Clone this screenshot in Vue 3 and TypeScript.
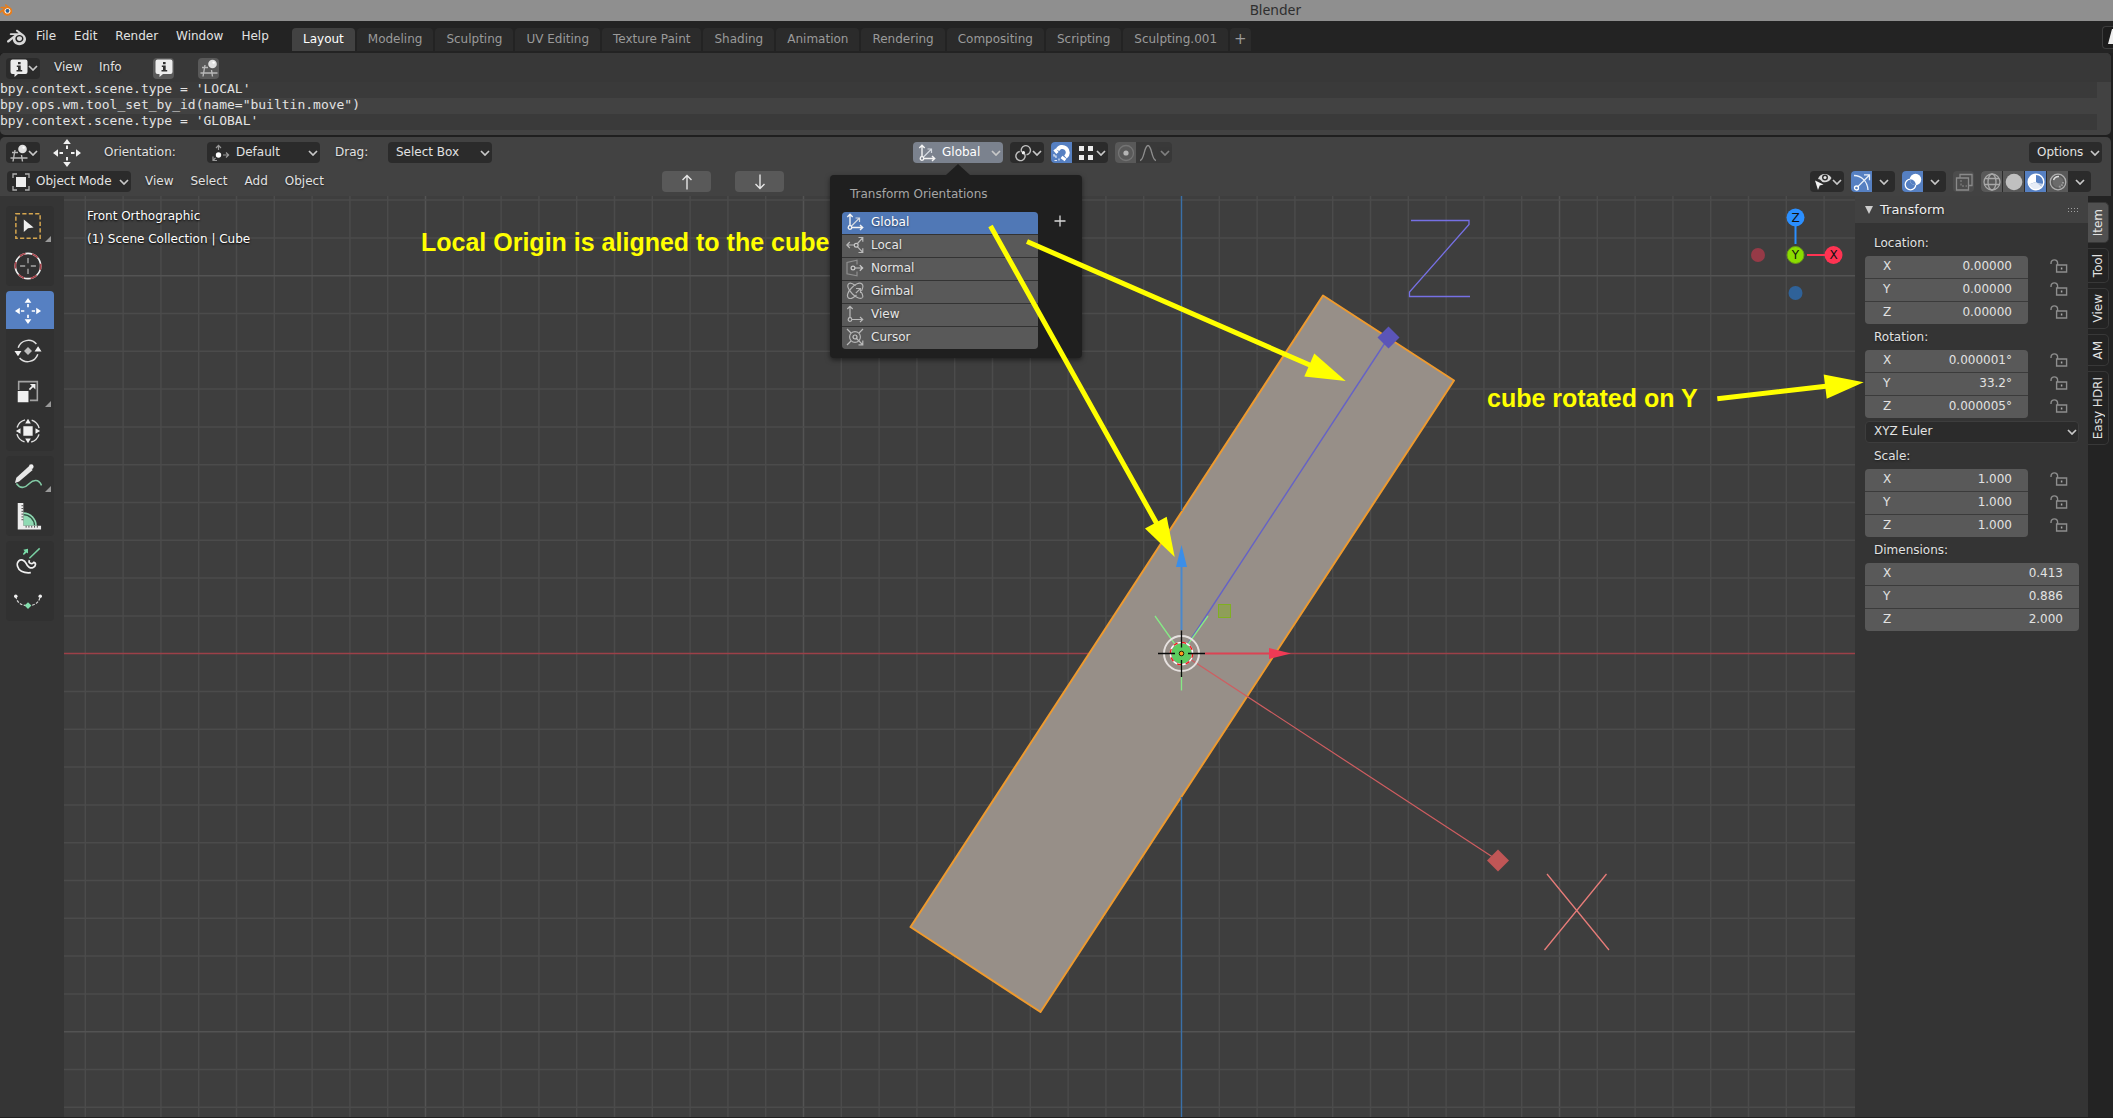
<script setup lang="ts">
import { ref } from 'vue'

interface Orientation { name: string; icon: string }
interface Field { axis: string; value: string }
interface FieldGroup { title: string; lockable: boolean; fields: Field[]; mode?: boolean }

const menus: string[] = ['File', 'Edit', 'Render', 'Window', 'Help']
const workspaces: string[] = [
  'Layout', 'Modeling', 'Sculpting', 'UV Editing', 'Texture Paint', 'Shading',
  'Animation', 'Rendering', 'Compositing', 'Scripting', 'Sculpting.001',
]
const activeWorkspace = ref('Layout')

const log: string[] = [
  "bpy.context.scene.type = 'LOCAL'",
  'bpy.ops.wm.tool_set_by_id(name="builtin.move")',
  "bpy.context.scene.type = 'GLOBAL'",
]

const orientations: Orientation[] = [
  { name: 'Global', icon: 'global' },
  { name: 'Local', icon: 'local' },
  { name: 'Normal', icon: 'normal' },
  { name: 'Gimbal', icon: 'gimbal' },
  { name: 'View', icon: 'view' },
  { name: 'Cursor', icon: 'cursor' },
]
const activeOrientation = ref('Global')

const viewMenus: string[] = ['View', 'Select', 'Add', 'Object']

const toolGroups: { id: string; label: string; more?: boolean }[][] = [
  [{ id: 'select', label: 'Select Box', more: true }, { id: 'cursor3d', label: 'Cursor' }],
  [
    { id: 'move', label: 'Move' }, { id: 'rotate', label: 'Rotate' },
    { id: 'scale', label: 'Scale', more: true }, { id: 'transform', label: 'Transform' },
  ],
  [{ id: 'annotate', label: 'Annotate', more: true }, { id: 'measure', label: 'Measure' }],
  [{ id: 'curve', label: 'Draw Curve' }, { id: 'points', label: 'Edit Points' }],
]
const activeTool = ref('move')

const groups = ref<FieldGroup[]>([
  { title: 'Location:', lockable: true, fields: [{ axis: 'X', value: '0.00000' }, { axis: 'Y', value: '0.00000' }, { axis: 'Z', value: '0.00000' }] },
  { title: 'Rotation:', lockable: true, mode: true, fields: [{ axis: 'X', value: '0.000001°' }, { axis: 'Y', value: '33.2°' }, { axis: 'Z', value: '0.000005°' }] },
  { title: 'Scale:', lockable: true, fields: [{ axis: 'X', value: '1.000' }, { axis: 'Y', value: '1.000' }, { axis: 'Z', value: '1.000' }] },
  { title: 'Dimensions:', lockable: false, fields: [{ axis: 'X', value: '0.413' }, { axis: 'Y', value: '0.886' }, { axis: 'Z', value: '2.000' }] },
])

const sideTabs: { name: string; size: string }[] = [
  { name: 'Item', size: 't40' }, { name: 'Tool', size: 't35' }, { name: 'View', size: 't41' },
  { name: 'AM', size: 't32' }, { name: 'Easy HDRI', size: 't74' },
]
const activeTab = ref('Item')

// World origin and grid step of the orthographic view
const origin = { x: 1181.5, y: 653.7 }
const step = 37.8
const range = (from: number, to: number): number[] => Array.from({ length: to - from + 1 }, (_, i) => from + i)
const columns = range(-29, 17).filter(k => k !== 0).map(k => ({ at: origin.x + k * step, major: k % 10 === 0 }))
const rows = range(-12, 12).filter(k => k !== 0).map(k => ({ at: origin.y + k * step, major: k % 10 === 0 }))
</script>

<template>
  <svg class="defs" aria-hidden="true">
    <symbol id="chev" viewBox="0 0 10 6"><path d="M1 1l4 4 4-4" fill="none" stroke="#c8c8c8" stroke-width="1.7" /></symbol>
    <symbol id="logo" viewBox="0 0 24 24">
      <path fill="currentColor" d="M12.51 13.214c.046-.8.438-1.506 1.03-2.006a3.424 3.424 0 0 1 2.212-.79c.85 0 1.631.3 2.211.79.592.5.983 1.206 1.028 2.005.045.823-.285 1.586-.865 2.153a3.389 3.389 0 0 1-2.374.938 3.393 3.393 0 0 1-2.376-.938c-.58-.567-.91-1.33-.865-2.152M7.35 14.831c.006.314.106.922.256 1.398a7.372 7.372 0 0 0 1.593 2.757 8.227 8.227 0 0 0 2.787 2.001 8.947 8.947 0 0 0 3.66.76 8.964 8.964 0 0 0 3.657-.772 8.285 8.285 0 0 0 2.785-2.01 7.428 7.428 0 0 0 1.592-2.762 6.964 6.964 0 0 0 .25-3.074 7.123 7.123 0 0 0-1.016-2.779 7.764 7.764 0 0 0-1.852-2.043h.002L13.566 2.55l-.02-.015c-.492-.378-1.319-.376-1.86.002-.547.382-.609 1.015-.123 1.415l-.001.001 3.126 2.543-9.53.01h-.013c-.788.001-1.545.518-1.695 1.172-.154.665.38 1.217 1.2 1.22V8.9l4.83-.01-8.62 6.617-.034.025c-.813.622-1.075 1.658-.563 2.313.52.667 1.625.668 2.447.004L7.414 14s-.069.52-.063.831zm12.09 1.741c-.97.988-2.326 1.548-3.795 1.55-1.47.004-2.827-.552-3.797-1.538a4.51 4.51 0 0 1-1.036-1.622 4.282 4.282 0 0 1 .282-3.519 4.702 4.702 0 0 1 1.153-1.371c.942-.768 2.141-1.183 3.396-1.185 1.256-.002 2.455.41 3.398 1.175.48.391.87.854 1.152 1.367a4.28 4.28 0 0 1 .522 1.706 4.236 4.236 0 0 1-.239 1.811 4.54 4.54 0 0 1-1.035 1.626" />
    </symbol>
    <symbol id="info" viewBox="0 0 18 18">
      <path d="M2.500 .5h13a2 2 0 0 1 2 2v10.500a2 2 0 0 1-2 2H8l-3.500 3V15h-2a2 2 0 0 1-2-2V2.500a2 2 0 0 1 2-2z" fill="#ececec" />
      <path d="M8 3h2.600v2.200H8zM6.800 6.500h3.900v4.500h1.500v1.400H6.500V11H8V8H6.800z" fill="#303030" />
    </symbol>
    <symbol id="view3d" viewBox="0 0 18 18">
      <circle cx="12.500" cy="5" r="4.300" fill="#e0e0e0" /><circle cx="13.600" cy="3.600" r="1.200" fill="#fff" />
      <path d="M2 8.500h6M.5 14h17M5 6L3 17.500M11.500 11l1 6.500" stroke="#b8b8b8" stroke-width="1.400" fill="none" />
    </symbol>
    <symbol id="move" viewBox="0 0 28 28">
      <path d="M14 0l3.800 5h-7.600zM14 28l3.800-5h-7.600zM0 14l5-3.800v7.600zM28 14l-5-3.800v7.600z" fill="#f0f0f0" />
      <path d="M14 6.500V10M14 18v3.500M6.500 14H10M18 14h3.500" stroke="#f0f0f0" stroke-width="2" />
    </symbol>
    <symbol id="default" viewBox="0 0 18 18">
      <circle cx="6.500" cy="11" r="2.700" fill="#fff" />
      <path d="M6.500 6V1.500M4 4l2.500-2.700L9 4M11 11h5.500M14 8.500l2.600 2.500-2.600 2.500M3.500 13.800L1.500 16M1 12.500V16.500h4" fill="none" stroke="#999" stroke-width="1.200" />
    </symbol>
    <symbol id="global" viewBox="0 0 18 18">
      <path d="M4 13V1.500M1.300 4L4 1.300 6.700 4M6 14.500h10.500M14 12l2.700 2.500L14 17" fill="none" stroke="#f4f4f4" stroke-width="1.400" />
      <path d="M5.500 13L13 5.500M9.500 5H13.500V9" fill="none" stroke="#d3d8df" stroke-width="1.200" />
      <circle cx="4" cy="14.500" r="1.800" fill="none" stroke="#f4f4f4" stroke-width="1.300" />
    </symbol>
    <symbol id="local" viewBox="0 0 18 18">
      <path d="M8.500 9H1M3.800 6L.8 9l3 3M11.500 7.500L16.500 2M12.500 1.500h4.300v4.300M11.500 10.800l5 5.200M12.500 16.500h4.300v-4.300" fill="none" stroke="#b9b9b9" stroke-width="1.200" />
      <circle cx="10.200" cy="9.200" r="1.900" fill="none" stroke="#c8c8c8" stroke-width="1.200" />
    </symbol>
    <symbol id="normal" viewBox="0 0 18 18">
      <path d="M11 5.500V1.200L1 3.500v11.300l10 2V12.500" fill="none" stroke="#8f8f8f" stroke-width="1.200" />
      <circle cx="7" cy="9" r="1.900" fill="none" stroke="#c8c8c8" stroke-width="1.200" />
      <path d="M9 9h7.500M13.800 6.200L16.700 9l-2.900 2.800" fill="none" stroke="#c8c8c8" stroke-width="1.200" />
    </symbol>
    <symbol id="gimbal" viewBox="0 0 18 18">
      <g fill="none" stroke="#b4b4b4" stroke-width="1.200">
        <path d="M3 1.500c-2.500 1.500-1 6 3.500 10.500 4 4 8.500 5.500 10 3.500M3 1.500c1.500-.8 4 .3 6.500 2.200" />
        <path d="M16 2c-2.500-2-7 0-10.500 4C1.500 10 .5 14.500 2.500 16c2 1.300 5-.2 8-3M16 2c1.500 1.500 1 4-.5 7M16.500 15.500c.8-1.500 0-3.500-1.300-5.500" />
        <path d="M9.800 11.200L14 7M10 6.500h4.500V11" />
      </g>
    </symbol>
    <symbol id="view" viewBox="0 0 18 18">
      <path d="M4 13V1.500M1.300 4L4 1.300 6.700 4M6 14.500h10.500M14 12l2.700 2.500L14 17" fill="none" stroke="#b9b9b9" stroke-width="1.200" />
      <circle cx="4" cy="14.500" r="1.800" fill="none" stroke="#b9b9b9" stroke-width="1.200" />
    </symbol>
    <symbol id="cursor" viewBox="0 0 18 18">
      <circle cx="9" cy="9" r="5.400" fill="none" stroke="#b4b4b4" stroke-width="1.200" /><circle cx="9" cy="9" r="2" fill="none" stroke="#c8c8c8" stroke-width="1.200" />
      <path d="M1 1l4 4M17 1l-4 4M1 17l4-4M10.500 10.500l6 6M12.500 16.800h4.300v-4.300" fill="none" stroke="#b9b9b9" stroke-width="1.200" />
    </symbol>
    <symbol id="objmode" viewBox="0 0 18 18">
      <rect x="4" y="4" width="10" height="10" fill="#eee" />
      <path d="M1 5V1h4M13 1h4v4M17 13v4h-4M5 17H1v-4" fill="none" stroke="#b0b0b0" stroke-width="1.300" />
    </symbol>
    <symbol id="pivot" viewBox="0 0 18 18">
      <path d="M7.600 8A4.600 4.600 0 1 1 12.500 10.800M10.500 9.800A4.600 4.600 0 1 1 5.800 7.500" fill="none" stroke="#c0c0c0" stroke-width="1.400" />
      <circle cx="9.400" cy="8.800" r="1.700" fill="#f2f2f2" />
    </symbol>
    <symbol id="magnet" viewBox="0 0 18 18">
      <path d="M4.500 6.200C6 2.500 10 2 12.800 4.300c2.700 2.400 2.700 6.200-.3 8.700" fill="none" stroke="#fff" stroke-width="4" />
      <path d="M1.500 5.500l3 3.500M8.500 13l4 3" stroke="#fff" stroke-width="3" /><path d="M1 10v2h2v2M1.500 16.500h2.500M6 14.500v2" stroke="#dfe8f5" stroke-width="1.200" fill="none" />
    </symbol>
    <symbol id="increment" viewBox="0 0 16 16"><path d="M1 1h5v5H1zM10 1h5v5h-5zM1 10h5v5H1zM10 10h5v5h-5z" fill="#ececec" /></symbol>
    <symbol id="prop" viewBox="0 0 18 18"><circle cx="9" cy="9" r="7.500" fill="none" stroke="#747474" stroke-width="1.300" /><circle cx="9" cy="9" r="2.600" fill="#b5b5b5" /></symbol>
    <symbol id="falloff" viewBox="0 0 18 18"><path d="M1 16.500C5.500 16 5 1.500 9 1.500S12.500 16 17 16.500" fill="none" stroke="#8c8c8c" stroke-width="1.400" /></symbol>
    <symbol id="eye" viewBox="0 0 18 18">
      <path d="M4 6C6-.5 14.500-.5 17.500 5c-2 4-6 5-9 4L6 6.500z" fill="#d8d8d8" /><circle cx="11" cy="4.600" r="3" fill="#2d2d2d" /><circle cx="11" cy="4.600" r="1.500" fill="#e8e8e8" />
      <path d="M1 7.500l8.500 4-3.800 1L4 17z" fill="#f2f2f2" />
    </symbol>
    <symbol id="gizmo" viewBox="0 0 18 18">
      <path d="M1 2.500C8 2.500 14.500 8 15 17M4.500 14L16 2.500M11 1.800h5.500v5.500" fill="none" stroke="#e9f0fa" stroke-width="1.300" /><circle cx="3.500" cy="15" r="2" fill="none" stroke="#fff" stroke-width="1.300" />
    </symbol>
    <symbol id="overlay" viewBox="0 0 18 18"><circle cx="11.500" cy="6.500" r="5.700" fill="#fff" /><circle cx="6.500" cy="11.500" r="5.300" fill="none" stroke="#fff" stroke-width="1.300" /><path d="M6.200 8.800a5.700 5.700 0 0 0 5.500 3.300 5.300 5.300 0 0 0-5.500-5.800z" fill="#5680c2" /></symbol>
    <symbol id="xray" viewBox="0 0 18 18"><path d="M5 5V1.500h12V12.500h-3.500M1.500 5h12v12h-12z" fill="none" stroke="#8a8a8a" stroke-width="1.300" /><path d="M6 7v6h6" fill="none" stroke="#8a8a8a" stroke-dasharray="2 1.500" /></symbol>
    <symbol id="wire" viewBox="0 0 18 18"><g fill="none" stroke="#a8a8a8" stroke-width="1.300"><circle cx="9" cy="9" r="8" /><ellipse cx="9" cy="9" rx="4" ry="8" /><path d="M2 5.500h14M1 11.500h16" /></g></symbol>
    <symbol id="solid" viewBox="0 0 18 18"><circle cx="9" cy="9" r="8.300" fill="#c0c0c0" /></symbol>
    <symbol id="material" viewBox="0 0 18 18">
      <circle cx="9" cy="9" r="7.800" fill="none" stroke="#fff" stroke-width="1.400" />
      <path d="M9 9V1.200A7.800 7.800 0 0 0 1.200 9a7.800 7.800 0 0 0 .4 2.500z" fill="#fff" />
      <path d="M9 9l6 5a7.800 7.800 0 0 1-13.300-2.500z" fill="#fff" opacity=".85" /><path d="M9 9.500l6.500 4.500 1-3z" fill="#fff" opacity=".6" />
    </symbol>
    <symbol id="rendered" viewBox="0 0 18 18"><circle cx="9" cy="9" r="7.800" fill="none" stroke="#b0b0b0" stroke-width="1.300" /><circle cx="9" cy="9" r="5.500" fill="#6b6b6b" /><path d="M4.500 7A5.500 5.500 0 0 1 10 3.500" stroke="#ddd" stroke-width="1.500" fill="none" /><path d="M14 9a5 5 0 0 1-5 5" stroke="#999" stroke-dasharray="1.500 1" fill="none" stroke-width="2" /></symbol>
    <symbol id="lock" viewBox="0 0 18 14"><path d="M1 5V4.200a3.300 3.300 0 0 1 6.600 0V6M6.600 6h10v7h-10z" fill="none" stroke="#8d8d8d" stroke-width="1.400" /><path d="M11.600 8.500v2" stroke="#aaa" stroke-width="1.500" /></symbol>
    <symbol id="t-select" viewBox="0 0 30 30"><rect x="2" y="2" width="26" height="26" fill="none" stroke="#d5a64f" stroke-width="1.600" stroke-dasharray="4.500 2.400" /><path d="M10.500 8l10.500 8.500-6 .8-4.500 4.200z" fill="#f0f0f0" /></symbol>
    <symbol id="t-cursor3d" viewBox="0 0 30 30"><circle cx="15" cy="15" r="13.600" fill="none" stroke="#f0f0f0" stroke-width="1.800" /><circle cx="15" cy="15" r="13.600" fill="none" stroke="#a8444c" stroke-width="1.800" stroke-dasharray="7 7.240" stroke-dashoffset="3" /><path d="M15 6.500V12M15 18v5.500M6.500 15H12M18 15h5.500" stroke="#a5a5a5" stroke-width="1.500" /></symbol>
    <symbol id="t-move" viewBox="0 0 30 30"><path d="M15 1l3.600 5.200h-7.200zM15 29l3.600-5.200h-7.200zM1 15l5.200-3.600v7.200zM29 15l-5.200-3.600v7.200z" fill="#fff" /><path d="M15 7.500v3.500M15 19v3.500M7.500 15H11M19 15h3.500" stroke="#fff" stroke-width="1.800" /></symbol>
    <symbol id="t-rotate" viewBox="0 0 30 30"><path d="M4.500 11.500A11.500 11.500 0 0 1 24 7.500M25.500 18.500A11.500 11.500 0 0 1 6 22.500" fill="none" stroke="#dedede" stroke-width="1.600" /><path d="M.5 15h7.500l-3.700 5.500zM22 15.500h7.500l-3.700-5.500z" fill="#f0f0f0" /><path d="M15 10.800l4.300 4.300-4.300 4.300-4.300-4.300z" fill="#bdbdbd" /></symbol>
    <symbol id="t-scale" viewBox="0 0 30 30"><path d="M5 14V5h20v20H17" fill="none" stroke="#a2a2a2" stroke-width="1.700" /><path d="M4 15h11.500v12H4z" fill="#f0f0f0" /><path d="M16.500 13.500l4-4" stroke="#f0f0f0" stroke-width="1.800" /><path d="M17 7.500h6V13.500z" fill="#f0f0f0" /></symbol>
    <symbol id="t-transform" viewBox="0 0 30 30"><circle cx="15" cy="15" r="12.300" fill="none" stroke="#e0e0e0" stroke-width="1.500" stroke-dasharray="12 7.320" stroke-dashoffset="-3.660" /><path d="M10 10h10v10H10zM15 2l3 5h-6zM15 28l3-5h-6zM2 15l5-3v6zM28 15l-5-3v6z" fill="#f0f0f0" /></symbol>
    <symbol id="t-annotate" viewBox="0 0 30 30"><path d="M2.500 23c5 7 10 4 14 0s10-5 13 2" fill="none" stroke="#82c9a4" stroke-width="1.700" /><path d="M1 22.500l1.500-5.500L16 4.500l4 4L5.500 21z" fill="#e8e8e8" /><circle cx="18.500" cy="5" r="2.500" fill="#f0f0f0" /></symbol>
    <symbol id="t-measure" viewBox="0 0 30 30"><path d="M10 11a15 15 0 0 1 14.500 14.500H10z" fill="#8fdab3" /><path d="M10 13.500A12 12 0 0 1 22 25" fill="none" stroke="#2f4f40" stroke-width="1.400" /><path d="M4 1h6v24.500h19V29.500H4z" fill="#ececec" /><path d="M8 4h2M8 7h2M8 10h2M8 13h2M8 16h2M8 19h2M13 25.500v2M16 25.500v2M19 25.500v2M22 25.500v2M25 25.500v2" stroke="#444" /></symbol>
    <symbol id="t-curve" viewBox="0 0 30 30"><path d="M16.500 12L27.500 1.500" stroke="#79cfa2" stroke-width="1.600" /><path d="M15 2v5l-1.500-1-3 2.500-1-1 2-3L10 3z" fill="#79dca8" /><path d="M16.500 14c-1.500 3.500 2.500 5 4.500 2.500 3 .5 2.500 4-.5 5.500-3 1.500-6-1-7.500-4.500-2-4-5.500-4.500-8-2.500-3 3-1 9 3 11 3 1.500 6 2 10 1.500" fill="none" stroke="#f0f0f0" stroke-width="1.800" /></symbol>
    <symbol id="t-points" viewBox="0 0 30 30"><path d="M2 10c1 7 6 10 13 10s12-3 13-10" fill="none" stroke="#cfcfcf" stroke-width="1.300" stroke-dasharray="3 1.500" /><circle cx="1.900" cy="10" r="1.900" fill="#f0f0f0" /><circle cx="28.100" cy="10" r="1.900" fill="#f0f0f0" /><path d="M15 16.300l3.600 3.600-3.600 3.600-3.600-3.600z" fill="#84dfae" /></symbol>
  </svg>

  <div class="app">
    <header class="titlebar">
      <svg class="app-icon" viewBox="4 0 20 24"><circle cx="15.700" cy="13.500" r="6" fill="#fff" /><use href="#logo" width="24" height="24" /><circle cx="15.700" cy="13.400" r="3.200" fill="#28629c" /></svg>
      <span>Blender</span>
    </header>

    <nav class="menubar">
      <svg class="brand"><use href="#logo" /></svg>
      <div class="menus"><button v-for="m in menus" :key="m">{{ m }}</button></div>
      <div class="tabs">
        <button v-for="w in workspaces" :key="w" :class="{ on: w === activeWorkspace }" @click="activeWorkspace = w">{{ w }}</button>
        <button class="add" aria-label="Add workspace">+</button>
      </div>
      <button class="scene-btn" aria-label="Scene"><svg viewBox="0 0 10 16"><path d="M5 0h5v15H1z" fill="#eee" /></svg></button>
    </nav>

    <section class="info">
      <div class="info-head">
        <button class="editor" aria-label="Editor type"><svg class="i18"><use href="#info" /></svg><svg class="chev"><use href="#chev" /></svg></button>
        <button class="text info-view">View</button>
        <button class="text info-info">Info</button>
        <button class="chip" aria-label="Info log"><svg class="i18"><use href="#info" /></svg></button>
        <button class="chip chip2" aria-label="3D viewport"><svg class="i18"><use href="#view3d" /></svg></button>
      </div>
      <div class="log"><p v-for="line in log" :key="line">{{ line }}</p></div>
    </section>

    <main class="editor3d">
      <div class="heads">
        <div class="row row1">
          <div class="side">
            <button class="editor" aria-label="Editor type"><svg class="i18"><use href="#view3d" /></svg><svg class="chev"><use href="#chev" /></svg></button>
            <svg class="cross"><use href="#move" /></svg>
            <label class="text lab-orient" for="orient">Orientation:</label>
            <div class="dd dd-orient iconed"><svg class="i18 lead"><use href="#default" /></svg><select id="orient"><option>Default</option></select><svg class="chev"><use href="#chev" /></svg></div>
            <label class="text lab-drag" for="drag">Drag:</label>
            <div class="dd dd-drag"><select id="drag"><option>Select Box</option></select><svg class="chev"><use href="#chev" /></svg></div>
          </div>
          <div class="mid">
            <div class="orient-wrap">
              <button class="orient-btn"><svg class="i18"><use href="#global" /></svg><span>Global</span><svg class="chev"><use href="#chev" /></svg></button>
              <div class="popup">
                <h2>Transform Orientations</h2>
                <div class="popup-body">
                  <div class="choices">
                    <button v-for="o in orientations" :key="o.name" :class="{ on: o.name === activeOrientation }" @click="activeOrientation = o.name">
                      <svg class="i18"><use :href="'#' + o.icon" /></svg>{{ o.name }}
                    </button>
                  </div>
                  <button class="plus" aria-label="Add orientation"><svg viewBox="0 0 12 12"><path d="M6 .5v11M.5 6h11" stroke="#d8d8d8" stroke-width="1.300" /></svg></button>
                </div>
              </div>
            </div>
            <button class="editor" aria-label="Pivot point"><svg class="i18"><use href="#pivot" /></svg><svg class="chev"><use href="#chev" /></svg></button>
            <div class="joined">
              <button class="sq on" aria-label="Snap"><svg class="i18"><use href="#magnet" /></svg></button>
              <button class="wide" aria-label="Snap to"><svg class="i16"><use href="#increment" /></svg><svg class="chev"><use href="#chev" /></svg></button>
            </div>
            <div class="joined faded">
              <button class="sq grey" aria-label="Proportional editing"><svg class="i18"><use href="#prop" /></svg></button>
              <button class="wide" aria-label="Falloff"><svg class="i18"><use href="#falloff" /></svg><svg class="chev"><use href="#chev" /></svg></button>
            </div>
          </div>
          <div class="side end">
            <button class="options"><span>Options</span><svg class="chev"><use href="#chev" /></svg></button>
          </div>
        </div>

        <div class="row row2">
          <div class="dd dd-mode iconed"><svg class="i18 lead"><use href="#objmode" /></svg><select aria-label="Mode"><option>Object Mode</option></select><svg class="chev"><use href="#chev" /></svg></div>
          <div class="view-menus"><button v-for="m in viewMenus" :key="m" class="text">{{ m }}</button></div>
          <div class="arrows">
            <button aria-label="Up"><svg viewBox="0 0 12 16"><path d="M6 15.500V1.500M1.500 6L6 1.500 10.500 6" fill="none" stroke="#e6e6e6" stroke-width="1.400" /></svg></button>
            <button aria-label="Down"><svg viewBox="0 0 12 16"><path d="M6 .5v14M1.500 10L6 14.500l4.500-4.500" fill="none" stroke="#e6e6e6" stroke-width="1.400" /></svg></button>
          </div>
          <div class="shading">
            <button class="editor" aria-label="Visibility"><svg class="i18"><use href="#eye" /></svg><svg class="chev"><use href="#chev" /></svg></button>
            <div class="joined"><button class="sq on" aria-label="Gizmos"><svg class="i18"><use href="#gizmo" /></svg></button><button class="drop" aria-label="Gizmo options"><svg class="chev"><use href="#chev" /></svg></button></div>
            <div class="joined"><button class="sq on" aria-label="Overlays"><svg class="i18"><use href="#overlay" /></svg></button><button class="drop" aria-label="Overlay options"><svg class="chev"><use href="#chev" /></svg></button></div>
            <button class="sq dim" aria-label="X-ray"><svg class="i18"><use href="#xray" /></svg></button>
            <div class="joined modes">
              <button class="sq grey" aria-label="Wireframe"><svg class="i18"><use href="#wire" /></svg></button>
              <button class="sq grey" aria-label="Solid"><svg class="i18"><use href="#solid" /></svg></button>
              <button class="sq on" aria-label="Material preview"><svg class="i18"><use href="#material" /></svg></button>
              <button class="sq grey" aria-label="Rendered"><svg class="i18"><use href="#rendered" /></svg></button>
              <button class="drop" aria-label="Shading options"><svg class="chev"><use href="#chev" /></svg></button>
            </div>
          </div>
        </div>
      </div>

      <div class="work">
        <aside class="tools">
          <div v-for="(g, gi) in toolGroups" :key="gi" class="tool-group">
            <button v-for="t in g" :key="t.id" :class="{ on: t.id === activeTool, flyout: t.more }" :aria-label="t.label" @click="activeTool = t.id">
              <svg class="i28"><use :href="'#t-' + t.id" /></svg>
            </button>
          </div>
        </aside>

        <section class="viewport">
          <svg class="scene" viewBox="64 196 1791 921" preserveAspectRatio="xMidYMid slice">
            <line v-for="c in columns" :key="'c' + c.at" :x1="c.at" :x2="c.at" y1="196" y2="1117" :class="c.major ? 'major' : 'minor'" />
            <line v-for="r in rows" :key="'r' + r.at" :y1="r.at" :y2="r.at" x1="64" x2="1855" :class="r.major ? 'major' : 'minor'" />
            <path d="M64 653.500H1855" stroke="#9c4048" stroke-width="1.300" />
            <path d="M1323 295.500L1454 380.500 1040.500 1012 910.500 927z" fill="#978f88" stroke="#ee9a2e" stroke-width="2" stroke-linejoin="round" />
            <path d="M1181.500 196V511M1181.500 797V1117" stroke="#3a70a8" stroke-width="1.400" />
            <path d="M1181.500 653.500L1388.500 337.500" stroke="#6562c6" stroke-width="1.400" />
            <path d="M1388.500 326.500l11 11-11 11-11-11z" fill="#5b55b8" />
            <path d="M1411 220.500h58v4L1409.500 292v4.500H1470" fill="none" stroke="#7670e4" stroke-width="1.300" />
            <path d="M1181.500 653.500L1498 860.500" stroke="#cf5d60" stroke-width="1.200" />
            <path d="M1498 849.500l11 11-11 11-11-11z" fill="#c05656" />
            <path d="M1547 874l62 76M1606.500 874l-62 76" stroke="#e77c79" stroke-width="1.300" />
            <path d="M1181.500 630V566" stroke="#4a88cc" stroke-width="2" /><path d="M1181.500 545l5.500 22h-11z" fill="#3b8ee8" />
            <path d="M1205 653.500h65" stroke="#dc4353" stroke-width="2" /><path d="M1291 653.500l-22 5.500v-11z" fill="#f03a55" />
            <rect x="1218.500" y="604.500" width="12" height="13" fill="#8f9e59" stroke="#80b021" />
            <path d="M1155 616l26.500 37.500L1208 616M1181.500 653.500v37" fill="none" stroke="#86e986" stroke-width="1.300" />
            <circle cx="1181.500" cy="653.500" r="10" fill="#5dcc60" />
            <circle cx="1181.500" cy="653.500" r="17.500" fill="none" stroke="#e6e1df" stroke-width="2" />
            <circle cx="1181.500" cy="653.500" r="11.200" fill="none" stroke="#fff" stroke-width="1.300" /><circle cx="1181.500" cy="653.500" r="11.200" fill="none" stroke="#f01818" stroke-width="1.300" stroke-dasharray="4.400 4.400" />
            <path d="M1158 653.500h17M1188 653.500h17M1181.500 630.500v17M1181.500 660v17" stroke="#0a0a0a" stroke-width="1.300" />
            <circle cx="1181.500" cy="653.500" r="2.300" fill="#ff9a1f" stroke="#2b1a00" />
          </svg>

          <div class="caption"><p>Front Orthographic</p><p>(1) Scene Collection | Cube</p></div>

          <svg class="nav" viewBox="0 0 86 96">
            <path d="M45.500 18v23" stroke="#2b8fff" stroke-width="2" /><path d="M57 52h27" stroke="#ff3352" stroke-width="2" />
            <circle cx="8" cy="52" r="7" fill="#963a47" /><circle cx="45.500" cy="90" r="7" fill="#2f6299" />
            <circle cx="45.500" cy="14.500" r="9" fill="#2b8fff" /><circle cx="83.500" cy="52" r="9" fill="#ff3352" /><circle cx="45.500" cy="52" r="8.500" fill="#8bdc00" stroke="#6a9c16" />
            <g class="axis-name"><text x="45.500" y="19">Z</text><text x="45.500" y="56">Y</text><text x="83.500" y="56">X</text></g>
          </svg>

          <svg class="notes" viewBox="64 196 1791 921" preserveAspectRatio="xMidYMid slice">
            <g fill="#ffff00" stroke="none">
              <path d="M1174.700 557l-29.700-28.500 21.700-11.800z" /><path d="M1345.700 381l-41.400-4.600 10-22.800z" /><path d="M1863.700 382.300l-40-7.800 3 24.200z" />
            </g>
            <g stroke="#ffff00" stroke-width="5"><path d="M990.500 226L1157 524M1027 241.500L1312 366M1717.300 398.700L1828 386" /></g>
            <text x="421" y="251">Local Origin is aligned to the cube</text>
            <text x="1487" y="407">cube rotated on Y</text>
          </svg>
        </section>

        <aside class="sidebar">
          <h3><svg class="tri" viewBox="0 0 8 8"><path d="M0 0h8L4 8z" fill="#ccc" /></svg>Transform<span class="grip"></span></h3>
          <div class="props">
            <template v-for="g in groups" :key="g.title">
              <h4>{{ g.title }}</h4>
              <div class="prop-row">
                <div class="fields">
                  <label v-for="f in g.fields" :key="f.axis"><span>{{ f.axis }}</span><input v-model="f.value" type="text" /></label>
                </div>
                <div v-if="g.lockable" class="locks">
                  <button v-for="f in g.fields" :key="f.axis" :aria-label="'Lock ' + f.axis"><svg><use href="#lock" /></svg></button>
                </div>
              </div>
              <div v-if="g.mode" class="dd dd-euler"><select aria-label="Rotation mode"><option>XYZ Euler</option></select><svg class="chev"><use href="#chev" /></svg></div>
            </template>
          </div>
        </aside>
        <nav class="side-tabs">
          <button v-for="t in sideTabs" :key="t.name" :class="[t.size, { on: t.name === activeTab }]" @click="activeTab = t.name"><span>{{ t.name }}</span></button>
        </nav>
      </div>
    </main>
  </div>
</template>

<style>
body { margin: 0; background: #1f1f1f; }
</style>

<style scoped>
* { box-sizing: border-box; }
.defs { position: absolute; width: 0; height: 0; }
.app { min-height: 100vh; display: flex; flex-direction: column; padding-bottom: 1px; background: #1f1f1f; color: #e2e2e2; font: 12px/16px "DejaVu Sans", sans-serif; overflow: hidden; }
button { font: inherit; color: inherit; border: 0; margin: 0; padding: 0; background: none; display: flex; align-items: center; white-space: nowrap; }
p, h2, h3, h4 { margin: 0; font: inherit; }
svg { flex: none; display: block; }
.i18 { width: 18px; height: 18px; }
.i16 { width: 16px; height: 16px; }
.i28 { width: 28px; height: 28px; }
.chev { width: 10px; height: 6px; }

.titlebar { position: relative; height: 21px; background: #8f8f8f; color: #2e2e2e; display: flex; align-items: center; justify-content: center; font: 14px/20px "Noto Sans", sans-serif; padding-bottom: 2px; }
.titlebar span { margin-left: 438px; }
.app-icon { position: absolute; left: 0; top: 3px; width: 13px; height: 14px; color: #e87d1a; }

.menubar { height: 32px; background: #232323; display: flex; align-items: center; padding-left: 7px; }
.brand { width: 19px; height: 19px; color: #d8d8d8; }
.menus { display: flex; gap: 18px; margin-left: 10px; width: 256px; padding-bottom: 2px; }
.tabs { display: flex; gap: 2px; align-self: flex-end; margin-bottom: 2px; }
.tabs button { height: 23px; padding: 0 11px 2px; border-radius: 4px 4px 0 0; background: #2b2b2b; color: #9a9a9a; }
.tabs button.on { background: #424242; color: #fff; }
.tabs .add { padding: 0 4px 2px; font-size: 15px; }
.scene-btn { margin-left: auto; width: 11px; height: 23px; border: 1px solid #3d3d3d; border-right: 0; border-radius: 4px 0 0 4px; background: #1d1d1d; padding-left: 4px; overflow: hidden; }
.scene-btn svg { width: 10px; height: 16px; }

.info { margin-right: 2px; border-radius: 5px; overflow: hidden; background: #424242; padding-bottom: 5px; }
.info-head { height: 29px; background: #383838; display: flex; align-items: center; padding: 1px 0 0 6px; }
.editor { height: 21px; width: 34px; padding: 0 3px 0 4px; justify-content: space-between; border-radius: 4px; background: #2b2b2b; }
.editor .chev { margin-right: -1px; }
.text { padding-bottom: 2px; text-shadow: 0 1px 2px rgba(0, 0, 0, .5); }
.info-view { margin-left: 14px; width: 45px; }
.info-info { width: 54px; }
.chip { width: 21px; height: 21px; justify-content: center; border-radius: 4px; background: #595959; }
.chip2 { margin-left: 24px; }
.log { font: 13px/14px "DejaVu Sans Mono", monospace; margin-right: 14px; }
.log p { height: 16px; }
.log p:nth-child(odd) { background: #3a3a3a; }

.editor3d { flex: 1; margin-top: 2px; display: flex; flex-direction: column; }
.heads { height: 59px; margin-right: 2px; padding-top: 5px; background: #424242; border-radius: 5px 5px 0 0; display: flex; flex-direction: column; gap: 8px; }
.row { display: flex; align-items: center; height: 21px; }
.row1 { padding: 0 9px 0 6px; }
.side { display: flex; align-items: center; flex: 1 1 0; }
.end { justify-content: flex-end; }
.mid { display: flex; gap: 7px; margin-right: 23px; }
.cross { width: 28px; height: 28px; margin: 0 23px 0 13px; }
.lab-orient { width: 103px; }
.lab-drag { width: 53px; margin-left: 15px; }
.dd { position: relative; height: 21px; }
.dd select { appearance: none; width: 100%; height: 100%; margin: 0; padding: 0 0 2px 8px; border: 0; border-radius: 4px; background: #2b2b2b; color: #e2e2e2; font: inherit; }
.dd.iconed select { padding-left: 29px; }
.dd .chev { position: absolute; right: 2px; top: 8px; pointer-events: none; }
.dd .lead { position: absolute; left: 5px; top: 2px; pointer-events: none; }
.dd-orient { width: 113px; }
.dd-drag { width: 104px; }
.dd-mode { width: 124px; }
.orient-wrap { position: relative; }
.orient-btn { width: 90px; height: 21px; padding: 0 2px 0 5px; border-radius: 4px; background: #7b828e; color: #fff; }
.orient-btn span { margin: 0 auto 0 6px; padding-bottom: 2px; }
.popup { position: absolute; z-index: 4; left: -83px; top: 33px; width: 252px; height: 183px; padding: 14px 16px 0 12px; border-radius: 4px; background: #1f1f1f; box-shadow: 0 2px 5px rgba(0, 0, 0, .5); }
.popup::before { content: ""; position: absolute; left: 116px; top: -11px; border: 12px solid transparent; border-top: 0; border-bottom: 11px solid #1f1f1f; }
.popup h2 { padding-left: 8px; height: 23px; line-height: 11px; color: #a6a6a6; }
.popup-body { display: flex; justify-content: space-between; align-items: flex-start; }
.choices { width: 196px; display: flex; flex-direction: column; gap: 1px; border-radius: 4px; overflow: hidden; background: #333; }
.choices button { height: 22px; gap: 7px; padding: 0 0 2px 4px; background: #595959; color: #e6e6e6; text-shadow: 0 1px 2px rgba(0, 0, 0, .5); }
.choices button.on { background: #5078b6; color: #fff; }
.plus { height: 18px; }
.plus svg { width: 12px; height: 12px; }
.joined { display: flex; border-radius: 4px; overflow: hidden; background: #2b2b2b; }
.sq { width: 21px; height: 21px; justify-content: center; }
.sq.on { background: #5680c2; }
.sq.grey { background: #595959; }
.sq.dim { background: #4c4c4c; border-radius: 4px; }
.wide { width: 36px; padding: 0 2px 0 6px; justify-content: space-between; }
.faded { background: #393939; }
.faded .wide { padding-left: 3px; }
.faded .chev { opacity: .5; }
.options { width: 73px; height: 21px; padding: 0 2px 0 8px; justify-content: space-between; border-radius: 4px; background: #2b2b2b; }
.options span { padding-bottom: 2px; }
.row2 { padding: 0 20px 0 7px; }
.view-menus { display: flex; gap: 17px; margin-left: 14px; width: 517px; }
.arrows { display: flex; gap: 24px; }
.arrows button { width: 49px; height: 21px; justify-content: center; border-radius: 4px; background: #595959; }
.arrows svg { width: 12px; height: 16px; }
.shading { margin-left: auto; display: flex; gap: 7px; }
.drop { width: 23px; justify-content: center; }
.modes { gap: 1px; }
.modes .drop { width: 22px; }

.work { flex: 1; display: flex; }
.tools { width: 64px; padding: 10px 10px 0 6px; background: #353535; display: flex; flex-direction: column; gap: 5px; }
.tool-group { border-radius: 4px; background: #313131; overflow: hidden; }
.tool-group button { position: relative; width: 48px; height: 40px; padding-left: 8px; }
.tool-group button.on { height: 38px; margin-bottom: 2px; padding-top: 1px; background: #5680c2; }
.tool-group button.flyout::after { content: ""; position: absolute; right: 3px; bottom: 4px; border: 3px solid transparent; border-right-color: #999; border-bottom-color: #999; }

.viewport { position: relative; flex: 1; min-width: 0; background: #3e3e3e; padding: 9px 23px; }
.scene, .notes { position: absolute; left: 0; top: 0; width: 100%; height: 100%; }
.scene line { stroke: #4b4b4b; stroke-width: 1.5; }
.scene line.major { stroke: #535353; }
.notes { z-index: 5; overflow: visible; pointer-events: none; }
.notes text { fill: #ffff00; font: bold 25px "Liberation Sans Narrow", "Liberation Sans", sans-serif; }
.caption { position: relative; color: #fff; line-height: 23px; text-shadow: 0 1px 2px #000; }
.nav { position: absolute; right: 19px; top: 7px; width: 86px; height: 96px; overflow: visible; }
.axis-name text { font: 12px "DejaVu Sans", sans-serif; fill: #111; text-anchor: middle; }

.sidebar { width: 233px; background: #343434; }
.sidebar h3 { height: 27px; padding: 0 9px 0 10px; display: flex; align-items: center; background: #414141; color: #f0f0f0; font-size: 13px; text-shadow: 0 1px 2px rgba(0, 0, 0, .5); }
.tri { width: 8px; height: 8px; margin-right: 7px; }
.grip { margin-left: auto; width: 12px; height: 6px; background: radial-gradient(circle, #a0a0a0 1px, transparent 1px) 0 0 / 3px 3px; }
.props { padding: 7px 9px 0 10px; }
.props h4 { padding-left: 9px; line-height: 26px; text-shadow: 0 1px 2px rgba(0, 0, 0, .5); }
.prop-row { display: flex; }
.fields { flex: 1; display: flex; flex-direction: column; gap: 1px; border-radius: 4px; overflow: hidden; background: #3b3b3b; }
.fields label { height: 22px; display: flex; align-items: center; padding: 0 16px 3px 18px; background: #595959; }
.fields input { flex: 1; min-width: 0; height: 18px; padding: 0; border: 0; background: none; color: inherit; font: inherit; text-align: right; outline: 0; }
.locks { width: 51px; padding-left: 22px; display: flex; flex-direction: column; gap: 1px; }
.locks button { height: 22px; padding-bottom: 2px; }
.locks svg { width: 18px; height: 14px; }
.dd-euler { height: 22px; margin-top: 3px; }
.dd-euler select { border: 1px solid #3d3d3d; }

.side-tabs { width: 25px; padding-top: 6px; background: #232323; display: flex; flex-direction: column; gap: 5px; }
.side-tabs button { width: 21px; justify-content: center; border: 1px solid #383838; border-left: 0; border-radius: 0 5px 5px 0; background: #232323; }
.side-tabs button.on { background: #505050; }
.side-tabs span { writing-mode: vertical-rl; transform: rotate(180deg); }
.t40 { height: 41px; }
.t35 { height: 35px; }
.t41 { height: 41px; }
.t32 { height: 32px; }
.t74 { height: 74px; }
</style>
